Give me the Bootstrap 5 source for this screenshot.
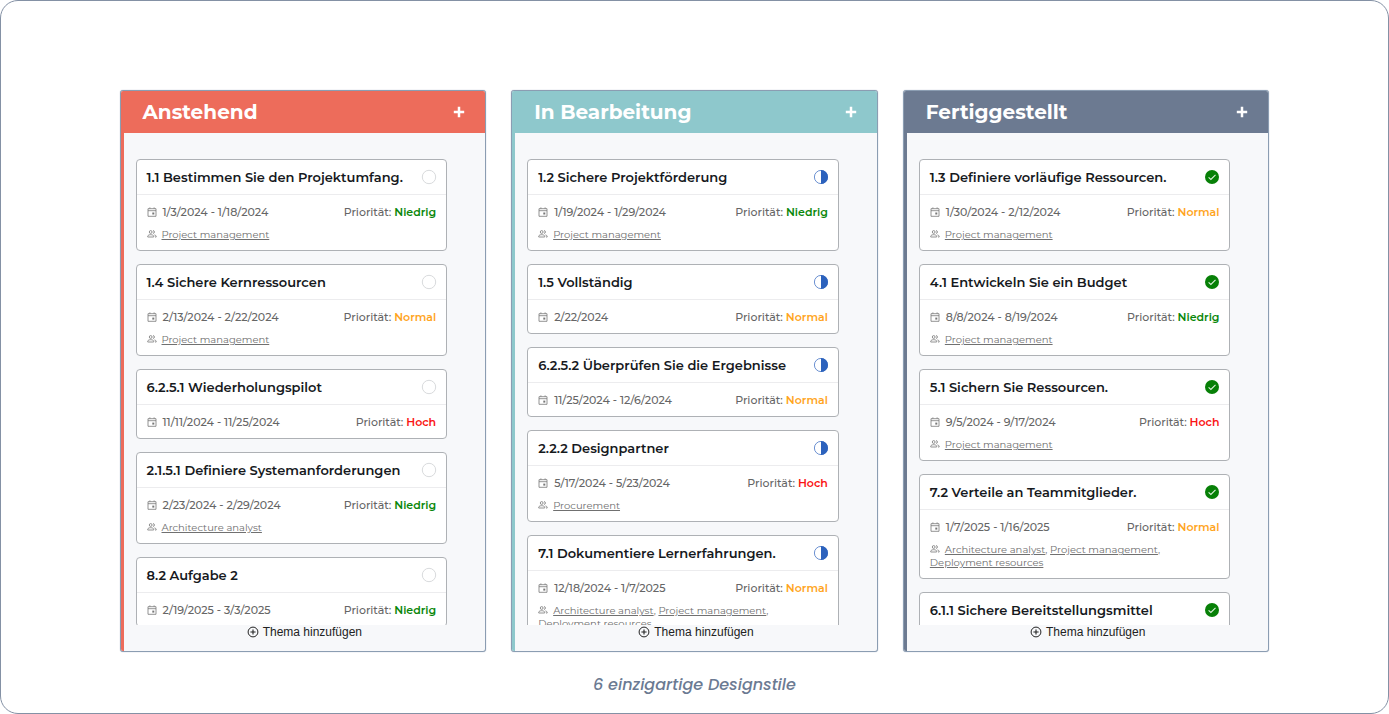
<!DOCTYPE html>
<html lang="de">
<head>
<meta charset="utf-8">
<meta name="viewport" content="width=device-width, initial-scale=1">
<title>6 einzigartige Designstile</title>
<link href="https://cdn.jsdelivr.net/npm/bootstrap@5.3.0/dist/css/bootstrap.min.css" rel="stylesheet">
<style>
  body { font-family: Montserrat, "Open Sans", sans-serif; background: #fff; }
  .frame { min-height: 100vh; border: 1px solid #8491a5; border-radius: 18px; padding: 89px 16px 16px; }
  .board { max-width: 1150px; display: grid; grid-template-columns: repeat(3, minmax(0, 1fr)); gap: 25px; }
  .lane { border: 1px solid #8b9db2; border-radius: 3px; background: #f7f8fa; overflow: hidden; box-shadow: 0 0 1px #8b9db2; }
  .lane-head { background: var(--lane); padding: 0 19px 0 22px; height: 42px; color: #fff; }
  .lane-head h2 { font-size: 20px; line-height: 24px; font-weight: 700; }
  .lane-body { border-left: 3px solid var(--lane); padding-top: 26px; }
  .lane-add { color: #fff; width: 14px; height: 14px; }
  .tasks { height: 466px; overflow-y: auto; scrollbar-width: none; padding: 0 38px 0 12px; }
  .tasks::-webkit-scrollbar { display: none; }
  .task { border: 1px solid #aeb1b5; border-radius: 4px; margin-bottom: 13px; color: #666; }
  .task header { height: 35px; padding: 0 9px 0 10px; border-bottom: 1px solid #ececee; }
  .task h3 { font-size: 13px; line-height: 18px; font-weight: 600; color: #16191d; }
  .task-info { padding: 8px 10px 7px; }
  .when { font-size: 11px; line-height: 18px; font-weight: 500; }
  .when svg { margin-right: 6px; }
  .team { font-size: 10px; line-height: 13px; margin: 7px 0 2px; }
  .team a { color: #707070; text-underline-offset: 1px; }
  .team svg { margin-right: 5px; vertical-align: -1px; }
  .state { width: 16px; height: 16px; flex: none; }
  .low { color: #0a870a; } .mid { color: #ffa51e; } .high { color: #fa1414; }
  .add-topic { font: 12px/14px "Liberation Sans", Arial, sans-serif; color: #222; height: 26px; padding-bottom: 12px; }
  .caption-line { font: italic 500 16px/24px Poppins, Inter, sans-serif; color: #6b7a92; margin-top: 21px; }
  @media (max-width: 991px) { .board { grid-template-columns: minmax(0, 1fr); max-width: 420px; } .frame { padding-top: 24px; } }
</style>
</head>
<body>
<svg class="d-none" aria-hidden="true">
  <symbol id="plus" viewBox="0 0 14 14"><path d="M7 1.800v10.400M1.800 7h10.400" stroke="currentColor" stroke-width="2.500"/></symbol>
  <symbol id="todo" viewBox="0 0 16 16"><circle cx="8" cy="8" r="6.700" fill="#fff" stroke="#d4d6d8" stroke-width=".9"/></symbol>
  <symbol id="half" viewBox="0 0 16 16"><circle cx="8" cy="8" r="6.600" fill="#fff" stroke="#2c62bd" stroke-width=".7"/><path d="M8 1a7 7 0 0 1 0 14z" fill="#2c62bd"/></symbol>
  <symbol id="done" viewBox="0 0 16 16"><circle cx="8" cy="8" r="7" fill="#078007"/><path d="M4.600 8.300l2.300 2.200 4.600-4.600" fill="none" stroke="#dff0df" stroke-width="1.100"/></symbol>
  <symbol id="cal" viewBox="0 0 10 10"><path d="M1 1.700h8v7.600H1zM1 3.700h8M2.900.4v1.300M7.100.4v1.300" fill="none" stroke="#777" stroke-width=".8"/><path d="M5.300 5.600h2v2h-2z" fill="#777"/></symbol>
  <symbol id="people" viewBox="0 0 10 10"><g fill="none" stroke="#777" stroke-width=".8"><circle cx="3.700" cy="3" r="1.400"/><path d="M.7 8V7.300C.7 6.200 2.400 5.700 3.700 5.700S6.700 6.200 6.700 7.300V8zM6 1.600a1.400 1.400 0 0 1 0 2.800M7.400 5.900C8.500 6.200 9.200 6.700 9.200 7.400V8H8"/></g></symbol>
  <symbol id="ring" viewBox="0 0 12 12"><circle cx="6" cy="6" r="4.900" fill="none" stroke="#222" stroke-width="1"/><path d="M6 3.400v5.200M3.400 6h5.200" stroke="#222" stroke-width="1.100"/></symbol>
</svg>

<main class="frame">
  <div class="board mx-auto">

    <section class="lane" style="--lane:#ed6c5b">
      <div class="lane-head d-flex align-items-center justify-content-between">
        <h2 class="m-0">Anstehend</h2>
        <button class="lane-add btn border-0 p-0 d-flex" aria-label="Thema hinzufügen"><svg width="14" height="14"><use href="#plus"/></svg></button>
      </div>
      <div class="lane-body">
        <div class="tasks">
          <article class="task bg-white">
            <header class="d-flex align-items-center justify-content-between"><h3 class="m-0">1.1 Bestimmen Sie den Projektumfang.</h3><svg class="state"><use href="#todo"/></svg></header>
            <div class="task-info">
              <div class="when d-flex justify-content-between"><span class="d-flex align-items-center"><svg width="10" height="10"><use href="#cal"/></svg>1/3/2024 - 1/18/2024</span><span>Priorität: <b class="low fw-semibold">Niedrig</b></span></div>
              <div class="team"><svg width="10" height="10"><use href="#people"/></svg><a href="#">Project management</a></div>
            </div>
          </article>
          <article class="task bg-white">
            <header class="d-flex align-items-center justify-content-between"><h3 class="m-0">1.4 Sichere Kernressourcen</h3><svg class="state"><use href="#todo"/></svg></header>
            <div class="task-info">
              <div class="when d-flex justify-content-between"><span class="d-flex align-items-center"><svg width="10" height="10"><use href="#cal"/></svg>2/13/2024 - 2/22/2024</span><span>Priorität: <b class="mid fw-semibold">Normal</b></span></div>
              <div class="team"><svg width="10" height="10"><use href="#people"/></svg><a href="#">Project management</a></div>
            </div>
          </article>
          <article class="task bg-white">
            <header class="d-flex align-items-center justify-content-between"><h3 class="m-0">6.2.5.1 Wiederholungspilot</h3><svg class="state"><use href="#todo"/></svg></header>
            <div class="task-info">
              <div class="when d-flex justify-content-between"><span class="d-flex align-items-center"><svg width="10" height="10"><use href="#cal"/></svg>11/11/2024 - 11/25/2024</span><span>Priorität: <b class="high fw-semibold">Hoch</b></span></div>
            </div>
          </article>
          <article class="task bg-white">
            <header class="d-flex align-items-center justify-content-between"><h3 class="m-0">2.1.5.1 Definiere Systemanforderungen</h3><svg class="state"><use href="#todo"/></svg></header>
            <div class="task-info">
              <div class="when d-flex justify-content-between"><span class="d-flex align-items-center"><svg width="10" height="10"><use href="#cal"/></svg>2/23/2024 - 2/29/2024</span><span>Priorität: <b class="low fw-semibold">Niedrig</b></span></div>
              <div class="team"><svg width="10" height="10"><use href="#people"/></svg><a href="#">Architecture analyst</a></div>
            </div>
          </article>
          <article class="task bg-white">
            <header class="d-flex align-items-center justify-content-between"><h3 class="m-0">8.2 Aufgabe 2</h3><svg class="state"><use href="#todo"/></svg></header>
            <div class="task-info">
              <div class="when d-flex justify-content-between"><span class="d-flex align-items-center"><svg width="10" height="10"><use href="#cal"/></svg>2/19/2025 - 3/3/2025</span><span>Priorität: <b class="low fw-semibold">Niedrig</b></span></div>
            </div>
          </article>
        </div>
        <button class="add-topic btn border-0 rounded-0 w-100 px-0 pt-0 d-flex justify-content-center align-items-center gap-1"><svg width="12" height="12"><use href="#ring"/></svg>Thema hinzufügen</button>
      </div>
    </section>

    <section class="lane" style="--lane:#8ec8cc">
      <div class="lane-head d-flex align-items-center justify-content-between">
        <h2 class="m-0">In Bearbeitung</h2>
        <button class="lane-add btn border-0 p-0 d-flex" aria-label="Thema hinzufügen"><svg width="14" height="14"><use href="#plus"/></svg></button>
      </div>
      <div class="lane-body">
        <div class="tasks">
          <article class="task bg-white">
            <header class="d-flex align-items-center justify-content-between"><h3 class="m-0">1.2 Sichere Projektförderung</h3><svg class="state"><use href="#half"/></svg></header>
            <div class="task-info">
              <div class="when d-flex justify-content-between"><span class="d-flex align-items-center"><svg width="10" height="10"><use href="#cal"/></svg>1/19/2024 - 1/29/2024</span><span>Priorität: <b class="low fw-semibold">Niedrig</b></span></div>
              <div class="team"><svg width="10" height="10"><use href="#people"/></svg><a href="#">Project management</a></div>
            </div>
          </article>
          <article class="task bg-white">
            <header class="d-flex align-items-center justify-content-between"><h3 class="m-0">1.5 Vollständig</h3><svg class="state"><use href="#half"/></svg></header>
            <div class="task-info">
              <div class="when d-flex justify-content-between"><span class="d-flex align-items-center"><svg width="10" height="10"><use href="#cal"/></svg>2/22/2024</span><span>Priorität: <b class="mid fw-semibold">Normal</b></span></div>
            </div>
          </article>
          <article class="task bg-white">
            <header class="d-flex align-items-center justify-content-between"><h3 class="m-0">6.2.5.2 Überprüfen Sie die Ergebnisse</h3><svg class="state"><use href="#half"/></svg></header>
            <div class="task-info">
              <div class="when d-flex justify-content-between"><span class="d-flex align-items-center"><svg width="10" height="10"><use href="#cal"/></svg>11/25/2024 - 12/6/2024</span><span>Priorität: <b class="mid fw-semibold">Normal</b></span></div>
            </div>
          </article>
          <article class="task bg-white">
            <header class="d-flex align-items-center justify-content-between"><h3 class="m-0">2.2.2 Designpartner</h3><svg class="state"><use href="#half"/></svg></header>
            <div class="task-info">
              <div class="when d-flex justify-content-between"><span class="d-flex align-items-center"><svg width="10" height="10"><use href="#cal"/></svg>5/17/2024 - 5/23/2024</span><span>Priorität: <b class="high fw-semibold">Hoch</b></span></div>
              <div class="team"><svg width="10" height="10"><use href="#people"/></svg><a href="#">Procurement</a></div>
            </div>
          </article>
          <article class="task bg-white">
            <header class="d-flex align-items-center justify-content-between"><h3 class="m-0">7.1 Dokumentiere Lernerfahrungen.</h3><svg class="state"><use href="#half"/></svg></header>
            <div class="task-info">
              <div class="when d-flex justify-content-between"><span class="d-flex align-items-center"><svg width="10" height="10"><use href="#cal"/></svg>12/18/2024 - 1/7/2025</span><span>Priorität: <b class="mid fw-semibold">Normal</b></span></div>
              <div class="team"><svg width="10" height="10"><use href="#people"/></svg><a href="#">Architecture analyst</a>, <a href="#">Project management</a>, <a href="#" class="d-inline-block">Deployment resources</a></div>
            </div>
          </article>
        </div>
        <button class="add-topic btn border-0 rounded-0 w-100 px-0 pt-0 d-flex justify-content-center align-items-center gap-1"><svg width="12" height="12"><use href="#ring"/></svg>Thema hinzufügen</button>
      </div>
    </section>

    <section class="lane" style="--lane:#6c7a91">
      <div class="lane-head d-flex align-items-center justify-content-between">
        <h2 class="m-0">Fertiggestellt</h2>
        <button class="lane-add btn border-0 p-0 d-flex" aria-label="Thema hinzufügen"><svg width="14" height="14"><use href="#plus"/></svg></button>
      </div>
      <div class="lane-body">
        <div class="tasks">
          <article class="task bg-white">
            <header class="d-flex align-items-center justify-content-between"><h3 class="m-0">1.3 Definiere vorläufige Ressourcen.</h3><svg class="state"><use href="#done"/></svg></header>
            <div class="task-info">
              <div class="when d-flex justify-content-between"><span class="d-flex align-items-center"><svg width="10" height="10"><use href="#cal"/></svg>1/30/2024 - 2/12/2024</span><span>Priorität: <b class="mid fw-semibold">Normal</b></span></div>
              <div class="team"><svg width="10" height="10"><use href="#people"/></svg><a href="#">Project management</a></div>
            </div>
          </article>
          <article class="task bg-white">
            <header class="d-flex align-items-center justify-content-between"><h3 class="m-0">4.1 Entwickeln Sie ein Budget</h3><svg class="state"><use href="#done"/></svg></header>
            <div class="task-info">
              <div class="when d-flex justify-content-between"><span class="d-flex align-items-center"><svg width="10" height="10"><use href="#cal"/></svg>8/8/2024 - 8/19/2024</span><span>Priorität: <b class="low fw-semibold">Niedrig</b></span></div>
              <div class="team"><svg width="10" height="10"><use href="#people"/></svg><a href="#">Project management</a></div>
            </div>
          </article>
          <article class="task bg-white">
            <header class="d-flex align-items-center justify-content-between"><h3 class="m-0">5.1 Sichern Sie Ressourcen.</h3><svg class="state"><use href="#done"/></svg></header>
            <div class="task-info">
              <div class="when d-flex justify-content-between"><span class="d-flex align-items-center"><svg width="10" height="10"><use href="#cal"/></svg>9/5/2024 - 9/17/2024</span><span>Priorität: <b class="high fw-semibold">Hoch</b></span></div>
              <div class="team"><svg width="10" height="10"><use href="#people"/></svg><a href="#">Project management</a></div>
            </div>
          </article>
          <article class="task bg-white">
            <header class="d-flex align-items-center justify-content-between"><h3 class="m-0">7.2 Verteile an Teammitglieder.</h3><svg class="state"><use href="#done"/></svg></header>
            <div class="task-info">
              <div class="when d-flex justify-content-between"><span class="d-flex align-items-center"><svg width="10" height="10"><use href="#cal"/></svg>1/7/2025 - 1/16/2025</span><span>Priorität: <b class="mid fw-semibold">Normal</b></span></div>
              <div class="team"><svg width="10" height="10"><use href="#people"/></svg><a href="#">Architecture analyst</a>, <a href="#">Project management</a>, <a href="#" class="d-inline-block">Deployment resources</a></div>
            </div>
          </article>
          <article class="task bg-white">
            <header class="d-flex align-items-center justify-content-between"><h3 class="m-0">6.1.1 Sichere Bereitstellungsmittel</h3><svg class="state"><use href="#done"/></svg></header>
          </article>
        </div>
        <button class="add-topic btn border-0 rounded-0 w-100 px-0 pt-0 d-flex justify-content-center align-items-center gap-1"><svg width="12" height="12"><use href="#ring"/></svg>Thema hinzufügen</button>
      </div>
    </section>
  </div>
  <p class="caption-line text-center mb-0">6 einzigartige Designstile</p>
</main>
<script src="https://cdn.jsdelivr.net/npm/bootstrap@5.3.0/dist/js/bootstrap.bundle.min.js"></script>
</body>
</html>
